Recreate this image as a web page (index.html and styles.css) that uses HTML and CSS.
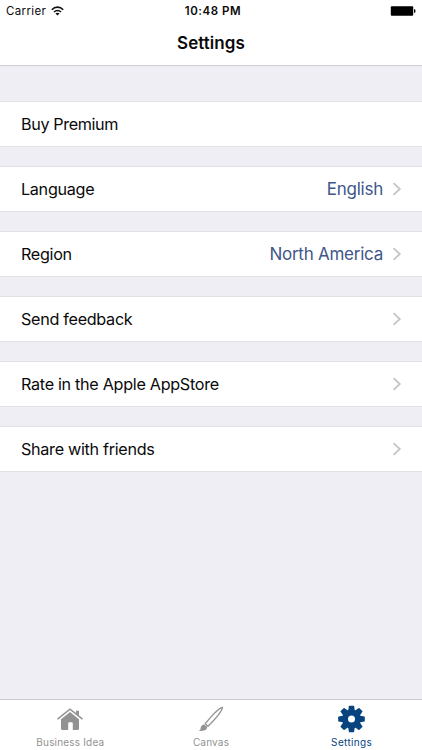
FILE: index.html
```html
<!DOCTYPE html>
<html lang="en">
<head>
<meta charset="utf-8">
<title>Settings</title>
<link rel="stylesheet" href="styles.css">
</head>
<body>
<svg width="0" height="0" class="defs"><symbol id="chevron" viewBox="0 0 10 14"><path d="M1.5 1.2 7.8 7 1.5 12.8" fill="none" stroke="#c4c4c9" stroke-width="1.8"/></symbol></svg>
<header class="header">
  <div class="status">
    <div class="carrier"><span>Carrier</span>
      <svg width="13" height="10" viewBox="0 0 13 10"><g fill="none" stroke="#111" stroke-width="1.6"><path d="M.8 3.7C4 .3 9 .3 12.2 3.7"/><path d="M3 6C5 4 8 4 10 6"/></g><path d="M4.5 7.5C5.7 6.4 7.3 6.4 8.5 7.5L6.5 9.5Z" fill="#111"/></svg>
    </div>
    <time class="clock">10:48 PM</time>
    <div class="battery"><svg width="26" height="10" viewBox="0 0 26 10"><rect x=".8" y=".3" width="22.4" height="9.4" rx="1"/><path d="M24 3.3h.6q.8 0 .8.8v1.8q0 .8-.8.8h-.6z"/></svg></div>
  </div>
  <h1 class="title">Settings</h1>
</header>
<main class="list">
  <div class="row"><span class="label premium">Buy Premium</span></div>
  <div class="row"><span class="label">Language</span><span class="value">English</span><svg class="chevron"><use href="#chevron"/></svg></div>
  <div class="row"><span class="label">Region</span><span class="value">North America</span><svg class="chevron"><use href="#chevron"/></svg></div>
  <div class="row"><span class="label">Send feedback</span><svg class="chevron"><use href="#chevron"/></svg></div>
  <div class="row"><span class="label">Rate in the Apple AppStore</span><svg class="chevron"><use href="#chevron"/></svg></div>
  <div class="row"><span class="label">Share with friends</span><svg class="chevron"><use href="#chevron"/></svg></div>
</main>
<nav class="tabs">
  <div class="tab">
    <svg width="28" height="28" viewBox="0 0 28 28"><path d="M1.5 14.2 14 4.2 26.5 14.2" fill="none" stroke="#929292" stroke-width="1.5"/><path d="M20 5.8h3v5l-3-2.4zM14 7 23 14.2V23.5Q23 25 21.5 25H16.8V18.5Q16.8 17.2 15.5 17.2H13.5Q12.2 17.2 12.2 18.5V25H6.5Q5 25 5 23.5V14.2Z" fill="#929292"/></svg>
    <span>Business Idea</span>
  </div>
  <div class="tab">
    <svg width="28" height="28" viewBox="0 0 28 28"><path d="M25.5 2.3C22 3.2 14.8 10.5 8.3 18.7L11 21.2C17.8 14.5 24.8 6.6 25.5 2.3Z" fill="#fff" stroke="#929292" stroke-width="1.3" stroke-linejoin="round"/><path d="M7.2 19.4 10.3 22.1Q9.7 26.7 1.6 25.8 4 25 3.7 22.7 4.2 19.7 7.2 19.4Z" fill="#929292"/></svg>
    <span>Canvas</span>
  </div>
  <div class="tab active">
    <svg width="28" height="28" viewBox="-13.5 -14 28 28"><defs><path id="teeth" d="M-3.2-9 -2.6-12.8Q-2.5-13.3-2-13.3H2Q2.5-13.3 2.6-12.8L3.2-9V9L2.6 12.8Q2.5 13.3 2 13.3H-2Q-2.5 13.3-2.6 12.8L-3.2 9Z"/></defs><g fill="#06437f"><circle r="9.4"/><use href="#teeth"/><use href="#teeth" transform="rotate(45)"/><use href="#teeth" transform="rotate(90)"/><use href="#teeth" transform="rotate(135)"/></g><circle r="3.5" fill="#fff"/></svg>
    <span class="settings">Settings</span>
  </div>
</nav>
</body>
</html>
```
FILE: styles.css
```css
* { box-sizing: border-box; }
body { margin: 0; height: 750px; overflow: hidden; display: flex; flex-direction: column; background: #efeef4; color: #0a0a0a; font-family: Inter, "Liberation Sans", sans-serif; }
svg { display: block; flex: none; }
.defs { position: absolute; }
.header { height: 66px; background: #fff; border-bottom: 1px solid #cfced3; }
.status { height: 22px; display: grid; grid-template-columns: 1fr auto 1fr; align-items: center; padding: 0 6px; font-size: 11.5px; line-height: 22px; }
.carrier { display: flex; align-items: center; gap: 5px; letter-spacing: .35px; }
.clock { font-weight: 600; letter-spacing: .55px; padding-left: 4px; }
.battery { justify-self: end; }
.title { margin: 0; font-size: 17px; line-height: 43px; font-weight: 600; text-align: center; letter-spacing: .05px; }
.list { flex: 1; padding-top: 35px; display: flex; flex-direction: column; gap: 19px; }
.row { height: 46px; flex: none; background: #fff; border: solid #e2e2e6; border-width: 1px 0; padding: 0 20px 0 21px; display: flex; align-items: center; font-size: 16.2px; letter-spacing: -.31px; }
.label { flex: 1; }
.premium { letter-spacing: -.38px; }
.value { color: #40578a; font-size: 17px; letter-spacing: -.25px; }
.chevron { width: 10px; height: 14px; margin-left: 9px; }
.tabs { height: 51px; background: #fff; border-top: 1px solid #c9c8ce; display: grid; grid-template-columns: repeat(3, 1fr); color: #929292; font-size: 10px; letter-spacing: .18px; }
.tab { display: flex; flex-direction: column; align-items: center; padding-top: 5px; line-height: 18px; }
.active { color: #06437f; }
.settings { letter-spacing: .35px; }
```
